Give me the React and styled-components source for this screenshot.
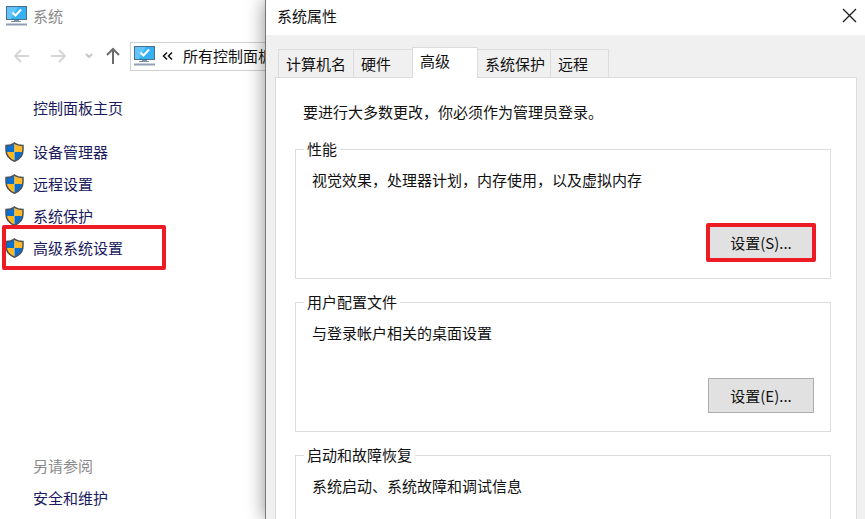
import React, { useState } from 'react';
import styled, { createGlobalStyle, ThemeProvider } from 'styled-components';

const theme = {
  color: {
    text: '#111',
    muted: '#8a8a8a',
    link: '#1a1a5c',
    surface: '#f0f0f0',
    line: '#dcdcdc',
    button: '#e1e1e1',
    buttonBorder: '#adadad',
    mark: '#ed1c24'
  }
};

const GlobalStyle = createGlobalStyle`
  * {
    box-sizing: border-box;
  }

  body {
    margin: 0;
    background-color: #fff;
  }

  body, button {
    font-family: 'Noto Sans CJK SC', sans-serif;
    font-size: 15px;
    line-height: 20px;
    color: ${theme.color.text};
  }
`;

const StyledWrapper = styled.div`
  display: grid;
  grid-template-columns: 265px minmax(0, 1fr);
  height: 100vh;
  overflow: hidden;
`;

const StyledSystemWindow = styled.div`
  display: flex;
  flex-direction: column;
  min-height: 0;
  overflow: hidden;
`;

const StyledTitle = styled.header`
  display: flex;
  align-items: center;
  gap: 6px;
  height: 32px;
  padding-left: 6px;
  color: ${({ theme }) => theme.color.muted};
`;

const StyledToolbar = styled.div`
  display: flex;
  align-items: center;
  height: 48px;
  padding-left: 12px;
`;

const StyledIconButton = styled.button`
  display: flex;
  flex: none;
  justify-content: center;
  align-items: center;
  width: ${({ $width }) => $width || 18}px;
  height: 20px;
  margin-right: ${({ $gap }) => $gap || 0}px;
  padding: 0;
  border: 0;
  background: none;
  color: ${({ $color }) => $color || '#111'};
`;

const StyledAddress = styled.div`
  display: flex;
  flex: none;
  align-items: center;
  height: 29px;
  padding: 0 3px;
  border: 1px solid #d0d0d0;
  white-space: nowrap;

  a {
    color: inherit;
    text-decoration: none;
  }
`;

const StyledSidebar = styled.nav`
  display: flex;
  flex: 1;
  flex-direction: column;
  padding: 12px 0 5px;
`;

const StyledTasks = styled.div`
  display: flex;
  flex-direction: column;
  margin: 12px 0 auto;
`;

const StyledRow = styled.div`
  display: flex;
  align-items: center;
  height: 32px;
  padding-left: 33px;
  color: ${({ theme }) => theme.color.muted};
`;

const StyledLink = styled(StyledRow).attrs({ as: 'a', href: '#' })`
  color: ${({ theme }) => theme.color.link};
  text-decoration: none;
`;

const StyledTaskLink = styled(StyledLink)`
  position: relative;
  gap: 9px;
  padding-left: 5px;
`;

const Mark = styled.span`
  position: absolute;
  inset: ${({ $inset }) => $inset};
  border: 4px solid ${({ theme }) => theme.color.mark};
  border-radius: 2px;
  pointer-events: none;
`;

const StyledDialog = styled.section`
  display: flex;
  flex-direction: column;
  min-height: 0;
  border-left: 1px solid #777;
  background-color: ${({ theme }) => theme.color.surface};
  box-shadow: 0 0 18px rgba(0, 0, 0, 0.45);
`;

const StyledDialogTitle = styled.header`
  display: flex;
  flex: none;
  justify-content: space-between;
  align-items: center;
  height: 35px;
  padding: 0 7px 4px 11px;
  background-color: #fff;
`;

const StyledTabs = styled.div`
  display: flex;
  flex: none;
  align-items: flex-end;
  height: 42px;
  padding-left: 13px;
`;

const StyledTab = styled.button`
  height: 28px;
  margin-left: -1px;
  padding: 0 7px;
  padding-right: ${({ $space }) => $space}px;
  border: 1px solid ${({ theme }) => theme.color.line};
  border-bottom: 0;
  background-color: ${({ theme }) => theme.color.surface};
  text-align: left;
  white-space: nowrap;

  &[aria-selected='true'] {
    z-index: 1;
    height: 31px;
    margin-bottom: -1px;
    padding-bottom: 4px;
    background-color: #fff;
  }
`;

const StyledPanel = styled.div`
  display: flex;
  flex: none;
  flex-direction: column;
  gap: 13px;
  margin: 0 8px 0 9px;
  padding: 24px 25px 12px 19px;
  border: 1px solid ${({ theme }) => theme.color.line};
  background-color: #fff;
`;

const StyledNotice = styled.p`
  margin: 0 0 4px;
  padding-left: 8px;
`;

const StyledGroup = styled.fieldset`
  display: flex;
  flex-direction: column;
  min-width: 0;
  margin: 0;
  padding: 11px 16px 18px;
  border: 1px solid ${({ theme }) => theme.color.line};

  legend {
    margin-left: -8px;
    padding: 0 3px;
  }

  p {
    margin: 0 0 35px;
  }
`;

const StyledButton = styled.button`
  position: relative;
  align-self: flex-end;
  width: 106px;
  height: 35px;
  padding: 0;
  border: 1px solid ${({ theme }) => theme.color.buttonBorder};
  background-color: ${({ theme }) => theme.color.button};
`;

const ComputerIcon = () => (
  <svg width="21" height="20" viewBox="0 0 21 20" aria-hidden="true">
    <rect x="0.5" y="0.5" width="20" height="13" fill="#35b1f6" stroke="#4a6f8c" />
    <path d="M1 1h11L5 13H1z" fill="#62c4fa" />
    <path d="M6.5 6.5l3 3 5.5-6" fill="none" stroke="#fff" strokeWidth="2" />
    <path d="M8 14h5v1h2v1H5v-1h3z" fill="#7897ad" />
    <path d="M0 18.5h21" stroke="#8ba0b5" strokeWidth="2" />
  </svg>
);

const ShieldIcon = () => (
  <svg width="19" height="20" viewBox="0 0 19 20" aria-hidden="true">
    <path d="M9.5 1C7.5 2.8 4 3.5 1 3.5V10h8.5z" fill="#0b6fd0" />
    <path d="M9.5 1c2 1.8 5.5 2.500 8.500 2.500V10H9.500z" fill="#fdb924" />
    <path d="M1 10c.5 4.500 3.500 7.500 8.500 9V10z" fill="#fdb924" />
    <path d="M18 10c-.5 4.500-3.500 7.500-8.500 9V10z" fill="#0b6fd0" />
    <path
      d="M9.5 1C7.3 2.8 4 3.5 1 3.5V8c0 5.500 3 9 8.500 11.200C15 17 18 13.500 18 8V3.500C15 3.500 11.700 2.800 9.500 1z"
      fill="none"
      stroke="#4d5357"
      strokeWidth="1.5"
    />
  </svg>
);

const ArrowIcon = ({ d, stroke = 2 }) => (
  <svg width="16" height="18" viewBox="0 0 16 18" aria-hidden="true">
    <path d={d} fill="none" stroke="currentColor" strokeWidth={stroke} />
  </svg>
);

const CloseIcon = () => (
  <svg width="15" height="15" viewBox="0 0 15 15" aria-hidden="true">
    <path d="M1 1l13 13M14 1L1 14" stroke="#222" strokeWidth="1.4" />
  </svg>
);

const tasks = ['设备管理器', '远程设置', '系统保护', '高级系统设置'];

const tabs = [
  { name: '计算机名', space: 7 },
  { name: '硬件', space: 21 },
  { name: '高级', space: 27 },
  { name: '系统保护', space: 5 },
  { name: '远程', space: 20 }
];

const groups = [
  { name: '性能', text: '视觉效果，处理器计划，内存使用，以及虚拟内存', button: '设置(S)...', marked: true },
  { name: '用户配置文件', text: '与登录帐户相关的桌面设置', button: '设置(E)...' },
  { name: '启动和故障恢复', text: '系统启动、系统故障和调试信息' }
];

const SystemWindow = () => (
  <StyledSystemWindow>
    <StyledTitle>
      <ComputerIcon />
      系统
    </StyledTitle>
    <StyledToolbar>
      <StyledIconButton aria-label="后退" $color="#d6d6d6" $gap={20}>
        <ArrowIcon d="M8 3L2 9l6 6M2 9h14" />
      </StyledIconButton>
      <StyledIconButton aria-label="前进" $color="#d6d6d6" $gap={14}>
        <ArrowIcon d="M8 3l6 6-6 6M14 9H0" />
      </StyledIconButton>
      <StyledIconButton aria-label="最近浏览的位置" $color="#c8c8c8" $width={16} $gap={6}>
        <ArrowIcon d="M4 7l3 3 3-3" />
      </StyledIconButton>
      <StyledIconButton aria-label="上移" $color="#6b6b6b" $gap={8}>
        <ArrowIcon d="M2 8l6-6 6 6M8 2v15" />
      </StyledIconButton>
      <StyledAddress>
        <ComputerIcon />
        <StyledIconButton aria-label="上级位置" $width={26} $gap={2}>
          <ArrowIcon d="M7 5.500L3.500 9l3.500 3.500M12 5.500L8.500 9l3.500 3.500" stroke={1.5} />
        </StyledIconButton>
        <a href="#">所有控制面板</a>
      </StyledAddress>
    </StyledToolbar>
    <StyledSidebar>
      <StyledLink>控制面板主页</StyledLink>
      <StyledTasks>
        {tasks.map(item => (
          <StyledTaskLink key={item}>
            <ShieldIcon />
            {item}
            {item === '高级系统设置' && <Mark $inset="-7px 99px -6px 2px" />}
          </StyledTaskLink>
        ))}
      </StyledTasks>
      <StyledRow>另请参阅</StyledRow>
      <StyledLink>安全和维护</StyledLink>
    </StyledSidebar>
  </StyledSystemWindow>
);

const PropertiesDialog = () => {
  const [currentTab, setTab] = useState('高级');

  return (
    <StyledDialog role="dialog" aria-labelledby="dialog-title">
      <StyledDialogTitle>
        <span id="dialog-title">系统属性</span>
        <StyledIconButton aria-label="关闭">
          <CloseIcon />
        </StyledIconButton>
      </StyledDialogTitle>
      <StyledTabs role="tablist">
        {tabs.map(({ name, space }) => (
          <StyledTab
            key={name}
            role="tab"
            aria-selected={name === currentTab}
            $space={space}
            onClick={() => setTab(name)}
          >
            {name}
          </StyledTab>
        ))}
      </StyledTabs>
      <StyledPanel role="tabpanel">
        <StyledNotice>要进行大多数更改，你必须作为管理员登录。</StyledNotice>
        {groups.map(({ name, text, button, marked }) => (
          <StyledGroup key={name}>
            <legend>{name}</legend>
            <p>{text}</p>
            {button && (
              <StyledButton>
                {button}
                {marked && <Mark $inset="-3px" />}
              </StyledButton>
            )}
          </StyledGroup>
        ))}
      </StyledPanel>
    </StyledDialog>
  );
};

const App = () => (
  <ThemeProvider theme={theme}>
    <GlobalStyle />
    <StyledWrapper>
      <SystemWindow />
      <PropertiesDialog />
    </StyledWrapper>
  </ThemeProvider>
);

export default App;
